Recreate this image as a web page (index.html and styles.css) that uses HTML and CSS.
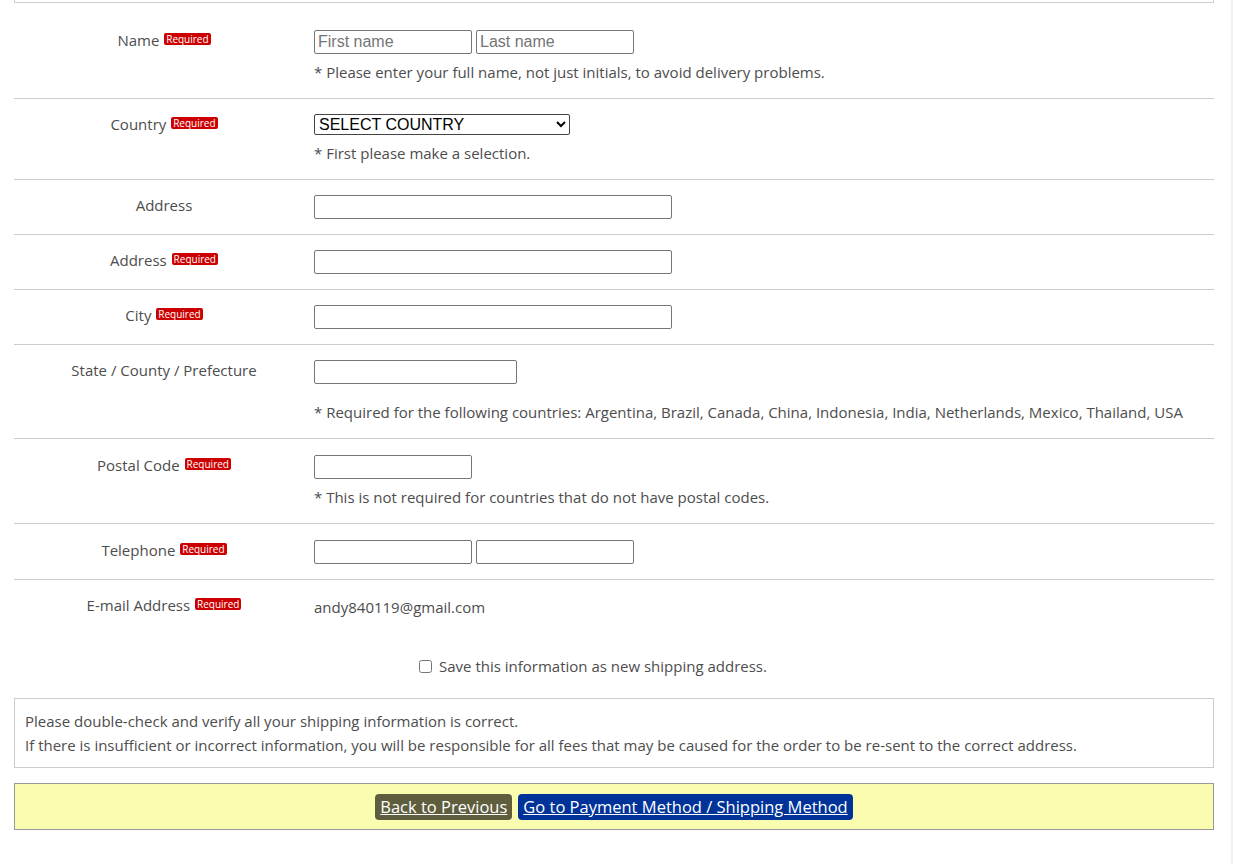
FILE: index.html
```html
<!DOCTYPE html>
<html lang="en">
<head>
<meta charset="utf-8">
<title>Shipping Address</title>
<link rel="stylesheet" href="styles.css">
</head>
<body>
<div class="page">
  <div class="top-box"></div>
  <div class="form">
    <div class="row">
      <div class="label">Name <span class="req">Required</span></div>
      <div class="field">
        <div class="inputs"><input class="in-s" type="text" placeholder="First name"><input class="in-s" type="text" placeholder="Last name"></div>
        <div class="note">* Please enter your full name, not just initials, to avoid delivery problems.</div>
      </div>
    </div>
    <div class="row">
      <div class="label">Country <span class="req">Required</span></div>
      <div class="field">
        <select class="sel"><option>SELECT COUNTRY</option></select>
        <div class="note">* First please make a selection.</div>
      </div>
    </div>
    <div class="row">
      <div class="label">Address</div>
      <div class="field"><input class="in-l" type="text"></div>
    </div>
    <div class="row">
      <div class="label">Address <span class="req">Required</span></div>
      <div class="field"><input class="in-l" type="text"></div>
    </div>
    <div class="row">
      <div class="label">City <span class="req">Required</span></div>
      <div class="field"><input class="in-l" type="text"></div>
    </div>
    <div class="row">
      <div class="label">State / County / Prefecture</div>
      <div class="field">
        <input class="in-m" type="text">
        <div class="note note-far">* Required for the following countries: Argentina, Brazil, Canada, China, Indonesia, India, Netherlands, Mexico, Thailand, USA</div>
      </div>
    </div>
    <div class="row row-tall">
      <div class="label">Postal Code <span class="req">Required</span></div>
      <div class="field">
        <input class="in-s" type="text">
        <div class="note">* This is not required for countries that do not have postal codes.</div>
      </div>
    </div>
    <div class="row row-tall">
      <div class="label">Telephone <span class="req">Required</span></div>
      <div class="field"><div class="inputs"><input class="in-s" type="text"><input class="in-s" type="text"></div></div>
    </div>
    <div class="row row-last">
      <div class="label">E-mail Address <span class="req">Required</span></div>
      <div class="field value">andy840119@gmail.com</div>
    </div>
  </div>
  <label class="save"><input type="checkbox" class="cb"> Save this information as new shipping address.</label>
  <div class="notice">
    <p>Please double-check and verify all your shipping information is correct.</p>
    <p>If there is insufficient or incorrect information, you will be responsible for all fees that may be caused for the order to be re-sent to the correct address.</p>
  </div>
  <div class="actions">
    <a class="btn btn-back" href="#">Back to Previous</a>
    <a class="btn btn-next" href="#">Go to Payment Method / Shipping Method</a>
  </div>
</div>
</body>
</html>
```

FILE: styles.css
```css
html {
  background: #fff;
}
body {
  margin: 0;
  font-family: "Open Sans", "Noto Sans", sans-serif;
  font-size: 15px;
  color: #4d4d4d;
  border-right: 2px solid #f0f0f0;
  min-height: 864px;
  box-sizing: border-box;
}
.page {
  width: 1200px;
  margin-left: 14px;
}
.top-box {
  height: 2px;
  border: 1px solid #ccc;
  border-top: none;
}
.form {
  margin-top: 12px;
}
.row {
  display: grid;
  grid-template-columns: 300px 1fr;
  padding: 15px 0;
  border-bottom: 1px solid #ccc;
}
.row-tall {
  padding-top: 16px;
}
.row-last {
  border-bottom: none;
}
.label {
  text-align: center;
  line-height: 20px;
}
.req {
  display: inline-block;
  background: #cc0000;
  color: #fff;
  font-size: 10px;
  line-height: 12px;
  padding: 0 2px;
  border-radius: 2px;
  vertical-align: 3px;
  margin-left: 1px;
}
.field {
  display: flex;
  flex-direction: column;
  align-items: flex-start;
}
.inputs {
  display: flex;
  gap: 4px;
}
input[type="text"] {
  box-sizing: border-box;
  height: 24px;
  margin: 0;
  padding: 1px 3px;
  border: 1px solid #767676;
  border-radius: 2px;
  font-family: "Liberation Sans", Arial, sans-serif;
  font-size: 16px;
  color: #000;
  background: #fff;
}
input::placeholder {
  color: #757575;
}
.in-s { width: 158px; }
.in-m { width: 203px; }
.in-l { width: 358px; }
.sel {
  box-sizing: border-box;
  width: 256px;
  height: 21px;
  margin: 0;
  font-family: "Liberation Sans", Arial, sans-serif;
  font-size: 16px;
  color: #000;
  border: 1px solid #444;
  border-radius: 2px;
  background: #fff;
  padding: 0;
}
.note {
  margin-top: 7px;
  line-height: 22px;
}
.note-far {
  margin-top: 17px;
}
.value {
  line-height: 24px;
}
.save {
  display: flex;
  justify-content: center;
  align-items: center;
  gap: 7px;
  margin-top: 21px;
  padding-right: 42px;
  line-height: 22px;
}
.cb {
  width: 13px;
  height: 13px;
  margin: 0;
}
.notice {
  margin-top: 21px;
  border: 1px solid #ccc;
  padding: 10px 10px;
  line-height: 24px;
}
.notice p {
  margin: 0;
}
.actions {
  margin-top: 15px;
  border: 1px solid #999;
  background: #fafdaf;
  padding: 10px 0 9px;
  display: flex;
  justify-content: center;
  gap: 6px;
}
.btn {
  display: inline-block;
  height: 26px;
  line-height: 26px;
  padding: 0 5px;
  border-radius: 4px;
  color: #fff;
  font-size: 16.5px;
  text-decoration: underline;
}
.btn-back {
  background: #5e5e3e;
}
.btn-next {
  background: #003399;
}
```
